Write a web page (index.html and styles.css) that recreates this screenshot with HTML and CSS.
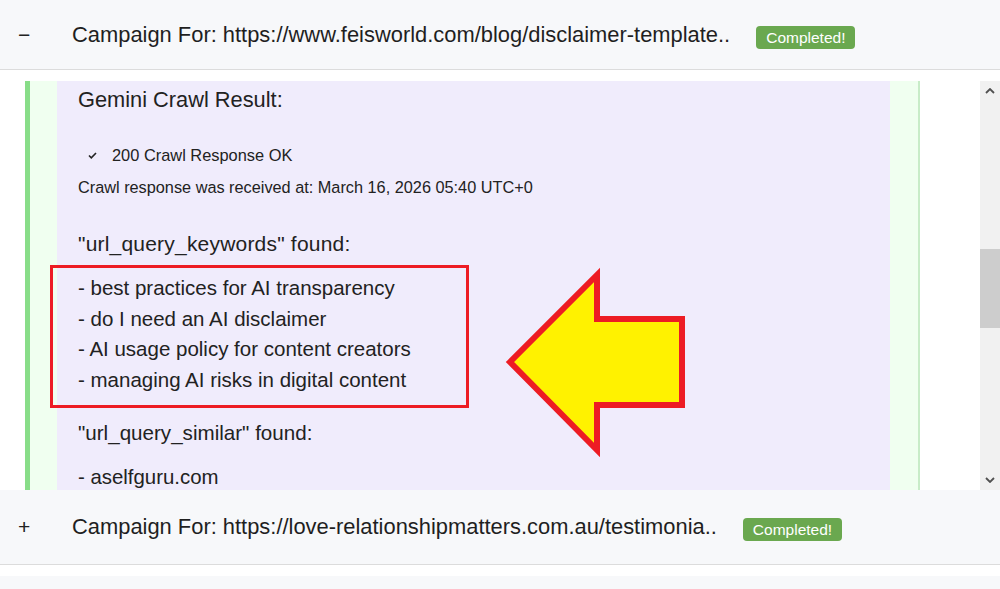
FILE: index.html
```html
<!DOCTYPE html>
<html>
<head>
<meta charset="utf-8">
<link rel="stylesheet" href="styles.css">
</head>
<body>
<div class="page">
  <div class="campaign campaign-first">
    <span class="toggle">&minus;</span>
    <span class="campaign-title">Campaign For: https://www.feisworld.com/blog/disclaimer-template..</span>
    <span class="badge">Completed!</span>
  </div>

  <div class="scroll-area">
    <div class="viewport">
      <div class="panel">
        <div class="result">
          <div class="result-title">Gemini Crawl Result:</div>
          <div class="check-row">
            <svg class="check" width="9" height="7" viewBox="0 0 9 7"><polyline points="1,3.5 3.3,5.8 8,1" fill="none" stroke="#222" stroke-width="1.6"/></svg>
            <span>200 Crawl Response OK</span>
          </div>
          <div class="received">Crawl response was received at: March 16, 2026 05:40 UTC+0</div>
          <div class="section-head head-keywords">"url_query_keywords" found:</div>
          <div class="list">
            <div>- best practices for AI transparency</div>
            <div>- do I need an AI disclaimer</div>
            <div>- AI usage policy for content creators</div>
            <div>- managing AI risks in digital content</div>
          </div>
          <div class="section-head head-similar">"url_query_similar" found:</div>
          <div class="similar-item">- aselfguru.com</div>
        </div>
        <div class="highlight-box"></div>
        <svg class="arrow" width="190" height="190" viewBox="0 0 190 190">
          <polygon points="20,90 107,3 107,47 192,47 192,133 107,133 107,178" transform="translate(-5,0)" fill="#fff200" stroke="#ed1c24" stroke-width="6" stroke-linejoin="miter"/>
        </svg>
      </div>
    </div>
    <div class="scrollbar">
      <div class="sb-btn">
        <svg width="10" height="6" viewBox="0 0 10 6"><polyline points="1,5 5,1 9,5" fill="none" stroke="#505050" stroke-width="1.8"/></svg>
      </div>
      <div class="sb-track"><div class="sb-thumb"></div></div>
      <div class="sb-btn">
        <svg width="10" height="6" viewBox="0 0 10 6"><polyline points="1,1 5,5 9,1" fill="none" stroke="#505050" stroke-width="1.8"/></svg>
      </div>
    </div>
  </div>

  <div class="campaign campaign-second">
    <span class="toggle">+</span>
    <span class="campaign-title">Campaign For: https://love-relationshipmatters.com.au/testimonia..</span>
    <span class="badge">Completed!</span>
  </div>
  <div class="campaign-third"></div>
</div>
</body>
</html>
```

FILE: styles.css
```css
html, body {
  margin: 0;
  padding: 0;
  background: #ffffff;
}
body {
  font-family: "Liberation Sans", Arial, sans-serif;
  color: #222222;
  width: 1000px;
  height: 589px;
  overflow: hidden;
}
.page {
  display: flex;
  flex-direction: column;
}
.campaign {
  display: flex;
  align-items: center;
  background: #f7f8fa;
  border-bottom: 1px solid #dcdcdc;
  font-size: 21.9px;
}
.campaign-first {
  height: 69px;
}
.campaign-second {
  height: 74px;
}
.toggle {
  width: 72px;
  padding-left: 18px;
  box-sizing: border-box;
  font-size: 21px;
}
.campaign-title {
  color: #1f1f1f;
}
.badge {
  background: #6aa84f;
  color: #ffffff;
  font-size: 15.5px;
  line-height: 23px;
  height: 23px;
  padding: 0 10px;
  border-radius: 4px;
  margin-left: 26px;
  margin-top: 5px;
}
.campaign-third {
  margin-top: 11px;
  height: 14px;
  background: #f7f8fa;
}
.scroll-area {
  margin-top: 11px;
  height: 409px;
  display: flex;
}
.viewport {
  flex: 1;
  overflow: hidden;
  padding-left: 25px;
}
.panel {
  position: relative;
  width: 895px;
  height: 409px;
  box-sizing: border-box;
  border-left: 5px solid #88dd88;
  border-right: 2px solid #c8ecc8;
  background: #f0fff0;
  padding: 0 28px 0 27px;
}
.result {
  background: #f0ecfc;
  height: 100%;
  padding-left: 21px;
  box-sizing: border-box;
  overflow: hidden;
}
.result-title {
  font-size: 21.8px;
  line-height: 24px;
  padding-top: 7px;
}
.check-row {
  margin-top: 33px;
  display: flex;
  align-items: center;
  font-size: 16.4px;
  line-height: 20px;
  padding-left: 10px;
}
.check {
  margin-right: 15px;
}
.received {
  margin-top: 12px;
  font-size: 16.3px;
  line-height: 20px;
}
.section-head {
  font-size: 20.6px;
  line-height: 24px;
}
.head-keywords {
  font-size: 21px;
  letter-spacing: 0.2px;
  margin-top: 35px;
}
.list {
  margin-top: 17px;
  font-size: 20.5px;
  line-height: 30.5px;
}
.head-similar {
  margin-top: 26px;
}
.similar-item {
  margin-top: 20px;
  font-size: 20.4px;
  line-height: 24px;
}
.highlight-box {
  position: absolute;
  left: 20px;
  top: 184px;
  width: 419px;
  height: 143px;
  box-sizing: border-box;
  border: 3px solid #ed1c24;
}
.arrow {
  position: absolute;
  left: 465px;
  top: 191px;
  overflow: visible;
}
.scrollbar {
  width: 20px;
  background: #f1f1f1;
  display: flex;
  flex-direction: column;
}
.sb-btn {
  height: 20px;
  display: flex;
  align-items: center;
  justify-content: center;
}
.sb-track {
  flex: 1;
  padding-top: 148px;
}
.sb-thumb {
  height: 79px;
  background: #cdcdcd;
}
```
